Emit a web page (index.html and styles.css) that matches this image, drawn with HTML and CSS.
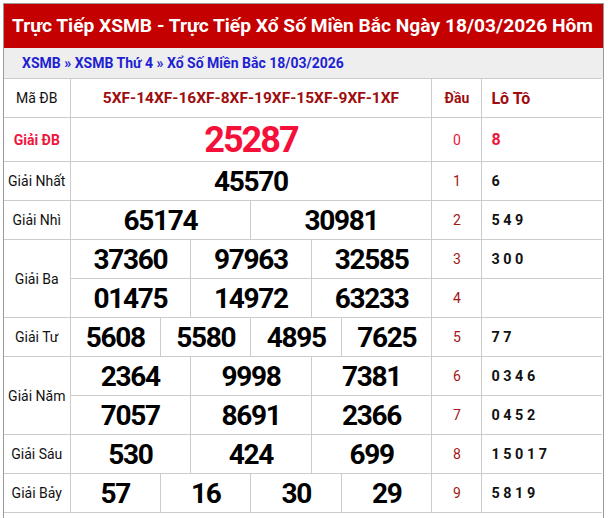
FILE: index.html
```html
<!DOCTYPE html>
<html lang="vi">
<head>
<meta charset="utf-8">
<title>XSMB</title>
<link rel="stylesheet" href="styles.css">
</head>
<body>
<div class="box">
  <h1 class="title">Trực Tiếp XSMB - Trực Tiếp Xổ Số Miền Bắc Ngày 18/03/2026 Hôm</h1>
  <div class="crumb"><a href="#">XSMB</a> » <a href="#">XSMB Thứ 4</a> » <a href="#">Xổ Số Miền Bắc 18/03/2026</a></div>
  <table class="kq">
    <colgroup>
      <col class="c-label">
      <col class="c-n"><col class="c-n"><col class="c-n"><col class="c-n"><col class="c-n"><col class="c-n">
      <col class="c-n"><col class="c-n"><col class="c-n"><col class="c-n"><col class="c-n"><col class="c-n">
      <col class="c-dau">
      <col class="c-loto">
    </colgroup>
    <tr class="r-head">
      <td class="lbl">Mã ĐB</td>
      <td colspan="12" class="code">5XF-14XF-16XF-8XF-19XF-15XF-9XF-1XF</td>
      <td class="dau-h">Đầu</td>
      <td class="loto-h">Lô Tô</td>
    </tr>
    <tr class="r-db">
      <td class="lbl lbl-db">Giải ĐB</td>
      <td colspan="12" class="num num-db">25287</td>
      <td class="dau dau-red">0</td>
      <td class="loto loto-red">8</td>
    </tr>
    <tr class="r">
      <td class="lbl">Giải Nhất</td>
      <td colspan="12" class="num">45570</td>
      <td class="dau">1</td>
      <td class="loto">6</td>
    </tr>
    <tr class="r">
      <td class="lbl">Giải Nhì</td>
      <td colspan="6" class="num">65174</td>
      <td colspan="6" class="num">30981</td>
      <td class="dau">2</td>
      <td class="loto">5 4 9</td>
    </tr>
    <tr class="r">
      <td class="lbl" rowspan="2">Giải Ba</td>
      <td colspan="4" class="num">37360</td>
      <td colspan="4" class="num">97963</td>
      <td colspan="4" class="num">32585</td>
      <td class="dau">3</td>
      <td class="loto">3 0 0</td>
    </tr>
    <tr class="r">
      <td colspan="4" class="num">01475</td>
      <td colspan="4" class="num">14972</td>
      <td colspan="4" class="num">63233</td>
      <td class="dau">4</td>
      <td class="loto"></td>
    </tr>
    <tr class="r">
      <td class="lbl">Giải Tư</td>
      <td colspan="3" class="num">5608</td>
      <td colspan="3" class="num">5580</td>
      <td colspan="3" class="num">4895</td>
      <td colspan="3" class="num">7625</td>
      <td class="dau">5</td>
      <td class="loto">7 7</td>
    </tr>
    <tr class="r">
      <td class="lbl" rowspan="2">Giải Năm</td>
      <td colspan="4" class="num">2364</td>
      <td colspan="4" class="num">9998</td>
      <td colspan="4" class="num">7381</td>
      <td class="dau">6</td>
      <td class="loto">0 3 4 6</td>
    </tr>
    <tr class="r">
      <td colspan="4" class="num">7057</td>
      <td colspan="4" class="num">8691</td>
      <td colspan="4" class="num">2366</td>
      <td class="dau">7</td>
      <td class="loto">0 4 5 2</td>
    </tr>
    <tr class="r">
      <td class="lbl">Giải Sáu</td>
      <td colspan="4" class="num">530</td>
      <td colspan="4" class="num">424</td>
      <td colspan="4" class="num">699</td>
      <td class="dau">8</td>
      <td class="loto">1 5 0 1 7</td>
    </tr>
    <tr class="r">
      <td class="lbl">Giải Bảy</td>
      <td colspan="3" class="num">57</td>
      <td colspan="3" class="num">16</td>
      <td colspan="3" class="num">30</td>
      <td colspan="3" class="num">29</td>
      <td class="dau">9</td>
      <td class="loto">5 8 1 9</td>
    </tr>
  </table>
</div>
</body>
</html>
```
FILE: styles.css
```css
* { box-sizing: border-box; }
html, body { margin: 0; padding: 0; background: #fff; }
body { font-family: Roboto, "Liberation Sans", Arial, sans-serif; }

.box {
  margin: 3px 0 0 3px;
  width: 601px;
  height: 515px;
  border: 1px solid #9a9a9a;
  border-bottom: none;
  background: #fff;
}

.title {
  margin: 0;
  height: 44px;
  line-height: 44px;
  padding-left: 8px;
  background: #c40000;
  color: #fff;
  font-size: 19.2px;
  font-weight: 700;
  white-space: nowrap;
  overflow: hidden;
}

.crumb {
  height: 30px;
  line-height: 30px;
  padding-left: 18px;
  background: #eeeeee;
  color: #1f1fd2;
  font-size: 14px;
  font-weight: 700;
}
.crumb a { color: #1f1fd2; text-decoration: none; }

.kq {
  width: 598px;
  border-collapse: collapse;
  table-layout: fixed;
  border-left: hidden;
  border-right: hidden;
}
.kq td {
  border: 1px solid #cccccc;
  padding: 0;
  text-align: center;
  vertical-align: middle;
}
.c-label { width: 66px; }
.c-n { width: 30.17px; }
.c-dau { width: 50px; }
.c-loto { width: 120px; }

.r-head td { height: 39px; }
.r-db td { height: 44px; }
.r td { height: 39px; }

.lbl { font-size: 14px; color: #111; }
.lbl-db { color: #f0143c; font-weight: 700; }

.code {
  color: #9e0d0d;
  font-size: 15.5px;
  font-weight: 700;
}
.dau-h { color: #9e0d0d; font-size: 14px; font-weight: 700; }
.kq td.loto-h {
  color: #9e0d0d;
  font-size: 16px;
  font-weight: 700;
  text-align: left;
  padding-left: 9px;
}

.num {
  font-size: 28px;
  font-weight: 700;
  color: #000;
  letter-spacing: -1.3px;
}
.num-db {
  font-size: 36px;
  color: #f5103a;
  letter-spacing: -2px;
}

.dau { font-size: 14px; color: #a31616; }
.dau-red { color: #f0143c; }

.kq td.loto {
  text-align: left;
  padding-left: 9px;
  font-size: 14.4px;
  font-weight: 700;
  color: #111;
}
.kq td.loto-red { color: #f0143c; font-size: 16px; }
```
